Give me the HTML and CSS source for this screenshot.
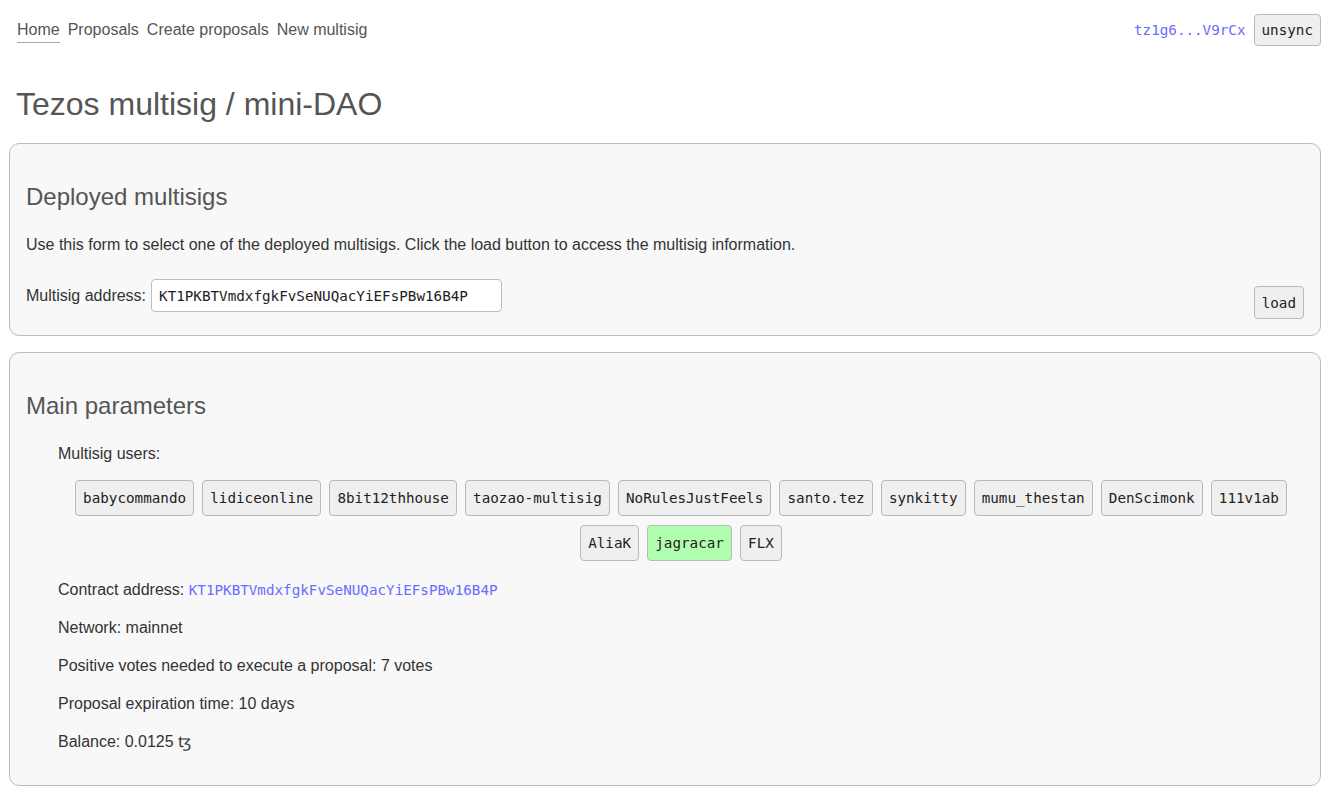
FILE: index.html
```html
<!DOCTYPE html>
<html lang="en">
<head>
<meta charset="utf-8">
<title>Tezos multisig / mini-DAO</title>
<link rel="stylesheet" href="styles.css">
</head>
<body>
<nav class="topnav">
  <ul class="navlinks">
    <li><a class="navlink active" href="#">Home</a></li>
    <li><a class="navlink" href="#">Proposals</a></li>
    <li><a class="navlink" href="#">Create proposals</a></li>
    <li><a class="navlink" href="#">New multisig</a></li>
  </ul>
  <div class="account">
    <a class="mono link" href="#">tz1g6...V9rCx</a>
    <button class="btn">unsync</button>
  </div>
</nav>

<h1 class="title">Tezos multisig / mini-DAO</h1>

<section class="card">
  <h2 class="card-title">Deployed multisigs</h2>
  <p class="text">Use this form to select one of the deployed multisigs. Click the load button to access the multisig information.</p>
  <form class="load-form">
    <label class="field">Multisig address: <input class="input mono" type="text" value="KT1PKBTVmdxfgkFvSeNUQacYiEFsPBw16B4P"></label>
    <button class="btn load-btn" type="button">load</button>
  </form>
</section>

<section class="card">
  <h2 class="card-title">Main parameters</h2>
  <div class="params">
    <p class="text">Multisig users:</p>
    <div class="users">
      <button class="btn user">babycommando</button>
      <button class="btn user">lidiceonline</button>
      <button class="btn user">8bit12thhouse</button>
      <button class="btn user">taozao-multisig</button>
      <button class="btn user">NoRulesJustFeels</button>
      <button class="btn user">santo.tez</button>
      <button class="btn user">synkitty</button>
      <button class="btn user">mumu_thestan</button>
      <button class="btn user">DenScimonk</button>
      <button class="btn user">111v1ab</button>
      <button class="btn user">AliaK</button>
      <button class="btn user current">jagracar</button>
      <button class="btn user">FLX</button>
    </div>
    <p class="text param">Contract address: <a class="mono link" href="#">KT1PKBTVmdxfgkFvSeNUQacYiEFsPBw16B4P</a></p>
    <p class="text param">Network: mainnet</p>
    <p class="text param">Positive votes needed to execute a proposal: 7 votes</p>
    <p class="text param">Proposal expiration time: 10 days</p>
    <p class="text param">Balance: 0.0125 ꜩ</p>
  </div>
</section>
</body>
</html>
```

FILE: styles.css
```css
html, body {
  margin: 0;
  padding: 0;
  background: #ffffff;
}

body {
  font-family: "Liberation Sans", Arial, sans-serif;
  font-size: 16px;
  color: #333333;
  padding: 0 8px 0 9px;
}

.mono {
  font-family: "DejaVu Sans Mono", "Liberation Mono", monospace;
  font-size: 14.25px;
}

.link {
  color: #6b6bff;
  text-decoration: none;
}

/* nav */
.topnav {
  display: flex;
  justify-content: space-between;
  align-items: flex-start;
  padding: 14px 0 0 8px;
  height: 32px;
}

.navlinks {
  list-style: none;
  margin: 6px 0 0 0;
  padding: 0;
  display: flex;
  gap: 8px;
}

.navlink {
  display: block;
  color: #555555;
  text-decoration: none;
  line-height: 20px;
  padding-bottom: 2px;
  border-bottom: 1px solid transparent;
}

.navlink.active {
  border-bottom-color: #a8a8a8;
}

.account {
  display: flex;
  align-items: center;
  gap: 8px;
  height: 32px;
}

/* buttons */
.btn {
  font-family: "DejaVu Sans Mono", "Liberation Mono", monospace;
  font-size: 14.25px;
  line-height: 18px;
  color: #222222;
  background: #efefef;
  border: 1px solid #b9b9b9;
  border-radius: 4px;
  padding: 6px 7px;
  margin: 0;
  cursor: pointer;
}

/* title */
.title {
  font-size: 32px;
  line-height: 36px;
  font-weight: normal;
  color: #555555;
  margin: 40px 0 21px 7px;
}

/* cards */
.card {
  background: #f8f8f8;
  border: 1px solid #bcbcbc;
  border-radius: 10px;
  padding: 16px;
  margin-bottom: 16px;
}

.card-title {
  font-size: 24px;
  line-height: 28px;
  font-weight: normal;
  color: #555555;
  margin: 23px 0 0 0;
}

.text {
  line-height: 22px;
  margin: 0;
}

.card-title + .text {
  margin-top: 23px;
}

.load-form {
  display: flex;
  justify-content: space-between;
  align-items: flex-start;
  margin-top: 23px;
}

.field {
  display: flex;
  align-items: center;
  gap: 5px;
  line-height: 22px;
}

.input {
  width: 351px;
  height: 33px;
  box-sizing: border-box;
  padding: 0 7px;
  border: 1px solid #bdbdbd;
  border-radius: 4px;
  background: #ffffff;
  color: #222222;
  outline: none;
}

.load-btn {
  margin-top: 7px;
  height: 33px;
}

/* params */
.params {
  padding-left: 32px;
  padding-bottom: 16px;
  margin-top: 23px;
}

.users {
  display: flex;
  flex-wrap: wrap;
  justify-content: center;
  gap: 9px 8.2px;
  margin: 15px 0 18px;
}

.user {
  padding: 8px 7px;
}

.user.current {
  background: #b0ffb0;
}

.param + .param {
  margin-top: 16px;
}
```
